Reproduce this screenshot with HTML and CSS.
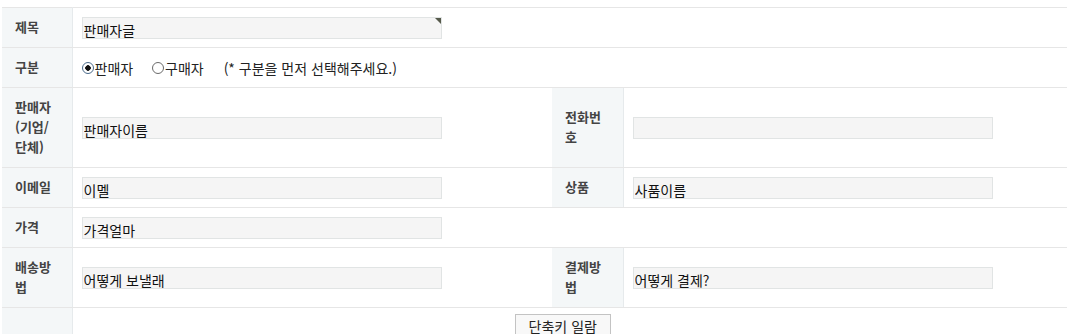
FILE: index.html
```html
<!DOCTYPE html>
<html lang="ko">
<head>
  <meta charset="UTF-8" />
  <title>판매 글쓰기</title>
  <link rel="stylesheet" href="styles.css">
</head>
<body>
  <table class="form-table">
    <colgroup>
      <col class="col-label">
      <col class="col-value">
      <col class="col-label2">
      <col>
    </colgroup>
    <tbody>
      <tr>
        <th>제목</th>
        <td colspan="3">
          <span class="title-box"><input class="field" value="판매자글" /></span>
        </td>
      </tr>
      <tr>
        <th>구분</th>
        <td colspan="3" class="type-cell">
          <label class="radio"><input type="radio" name="kind" checked />판매자</label>
          <label class="radio"><input type="radio" name="kind" />구매자</label>
          <span class="hint">(* 구분을 먼저 선택해주세요.)</span>
        </td>
      </tr>
      <tr>
        <th>판매자(기업/단체)</th>
        <td><input class="field" value="판매자이름" /></td>
        <th>전화번호</th>
        <td><input class="field" value="" /></td>
      </tr>
      <tr>
        <th>이메일</th>
        <td><input class="field" value="이멜" /></td>
        <th>상품</th>
        <td><input class="field" value="사품이름" /></td>
      </tr>
      <tr>
        <th>가격</th>
        <td colspan="3"><input class="field" value="가격얼마" /></td>
      </tr>
      <tr>
        <th>배송방법</th>
        <td><input class="field" value="어떻게 보낼래" /></td>
        <th>결제방법</th>
        <td><input class="field" value="어떻게 결제?" /></td>
      </tr>
      <tr>
        <th></th>
        <td colspan="3" class="btn-cell">
          <button class="btn">단축키 일람</button>
        </td>
      </tr>
    </tbody>
  </table>
</body>
</html>
```

FILE: styles.css
```css
body {
  margin: 0;
  background: #fff;
  font-family: "Noto Sans CJK KR", "Noto Sans", sans-serif;
  color: #333;
}
.form-table {
  width: 1065px;
  margin: 7px 0 0 2px;
  border-collapse: collapse;
  table-layout: fixed;
  border-top: 1px solid #e6e6e6;
}
.col-label { width: 70px; }
.col-value { width: 480px; }
.col-label2 { width: 71px; }
th, td {
  border-bottom: 1px solid #e6e6e6;
}
th {
  background: #f4f7f8;
  border-right: 1px solid #e6eaec;
  padding: 9px 14px 10px 13px;
  font-size: 13px;
  font-weight: bold;
  line-height: 20px;
  text-align: left;
  vertical-align: middle;
  color: #444;
}
td {
  padding: 0 9px;
  vertical-align: middle;
  font-size: 14px;
}
.field {
  box-sizing: border-box;
  width: 360px;
  height: 22px;
  margin: 0;
  padding: 3px 1px 0;
  border: 1px solid #e1e4e4;
  background: #f5f5f5;
  font-family: "Noto Sans CJK KR", sans-serif;
  font-size: 14px;
  color: #111;
  vertical-align: middle;
}
.title-box {
  position: relative;
  display: inline-block;
  vertical-align: middle;
}
.title-box .field {
  display: block;
}
.title-box::after {
  content: "";
  position: absolute;
  top: 1px;
  right: 1px;
  border-top: 6px solid #55594a;
  border-left: 6px solid transparent;
}
.type-cell {
  color: #222;
}
.radio {
  display: inline-flex;
  align-items: center;
  margin-right: 15px;
}
.radio input {
  appearance: none;
  box-sizing: border-box;
  width: 12px;
  height: 12px;
  margin: 0 1px 0 0;
  border: 1px solid #6a6a6a;
  border-radius: 50%;
  background: #fff;
}
.radio input:checked {
  border-color: #4a6a8a;
  background: radial-gradient(circle, #111 0 2.5px, #fff 3px);
}
.hint {
  margin-left: 1px;
}
.btn-cell {
  padding: 6px 14px 0 0;
  text-align: center;
  vertical-align: top;
}
.btn {
  padding: 1px 13px 0;
  height: 22px;
  background: #f8f8f8;
  border: 1px solid #c3c3c3;
  border-radius: 0;
  font-family: "Noto Sans CJK KR", sans-serif;
  font-size: 14px;
  color: #222;
}
```
